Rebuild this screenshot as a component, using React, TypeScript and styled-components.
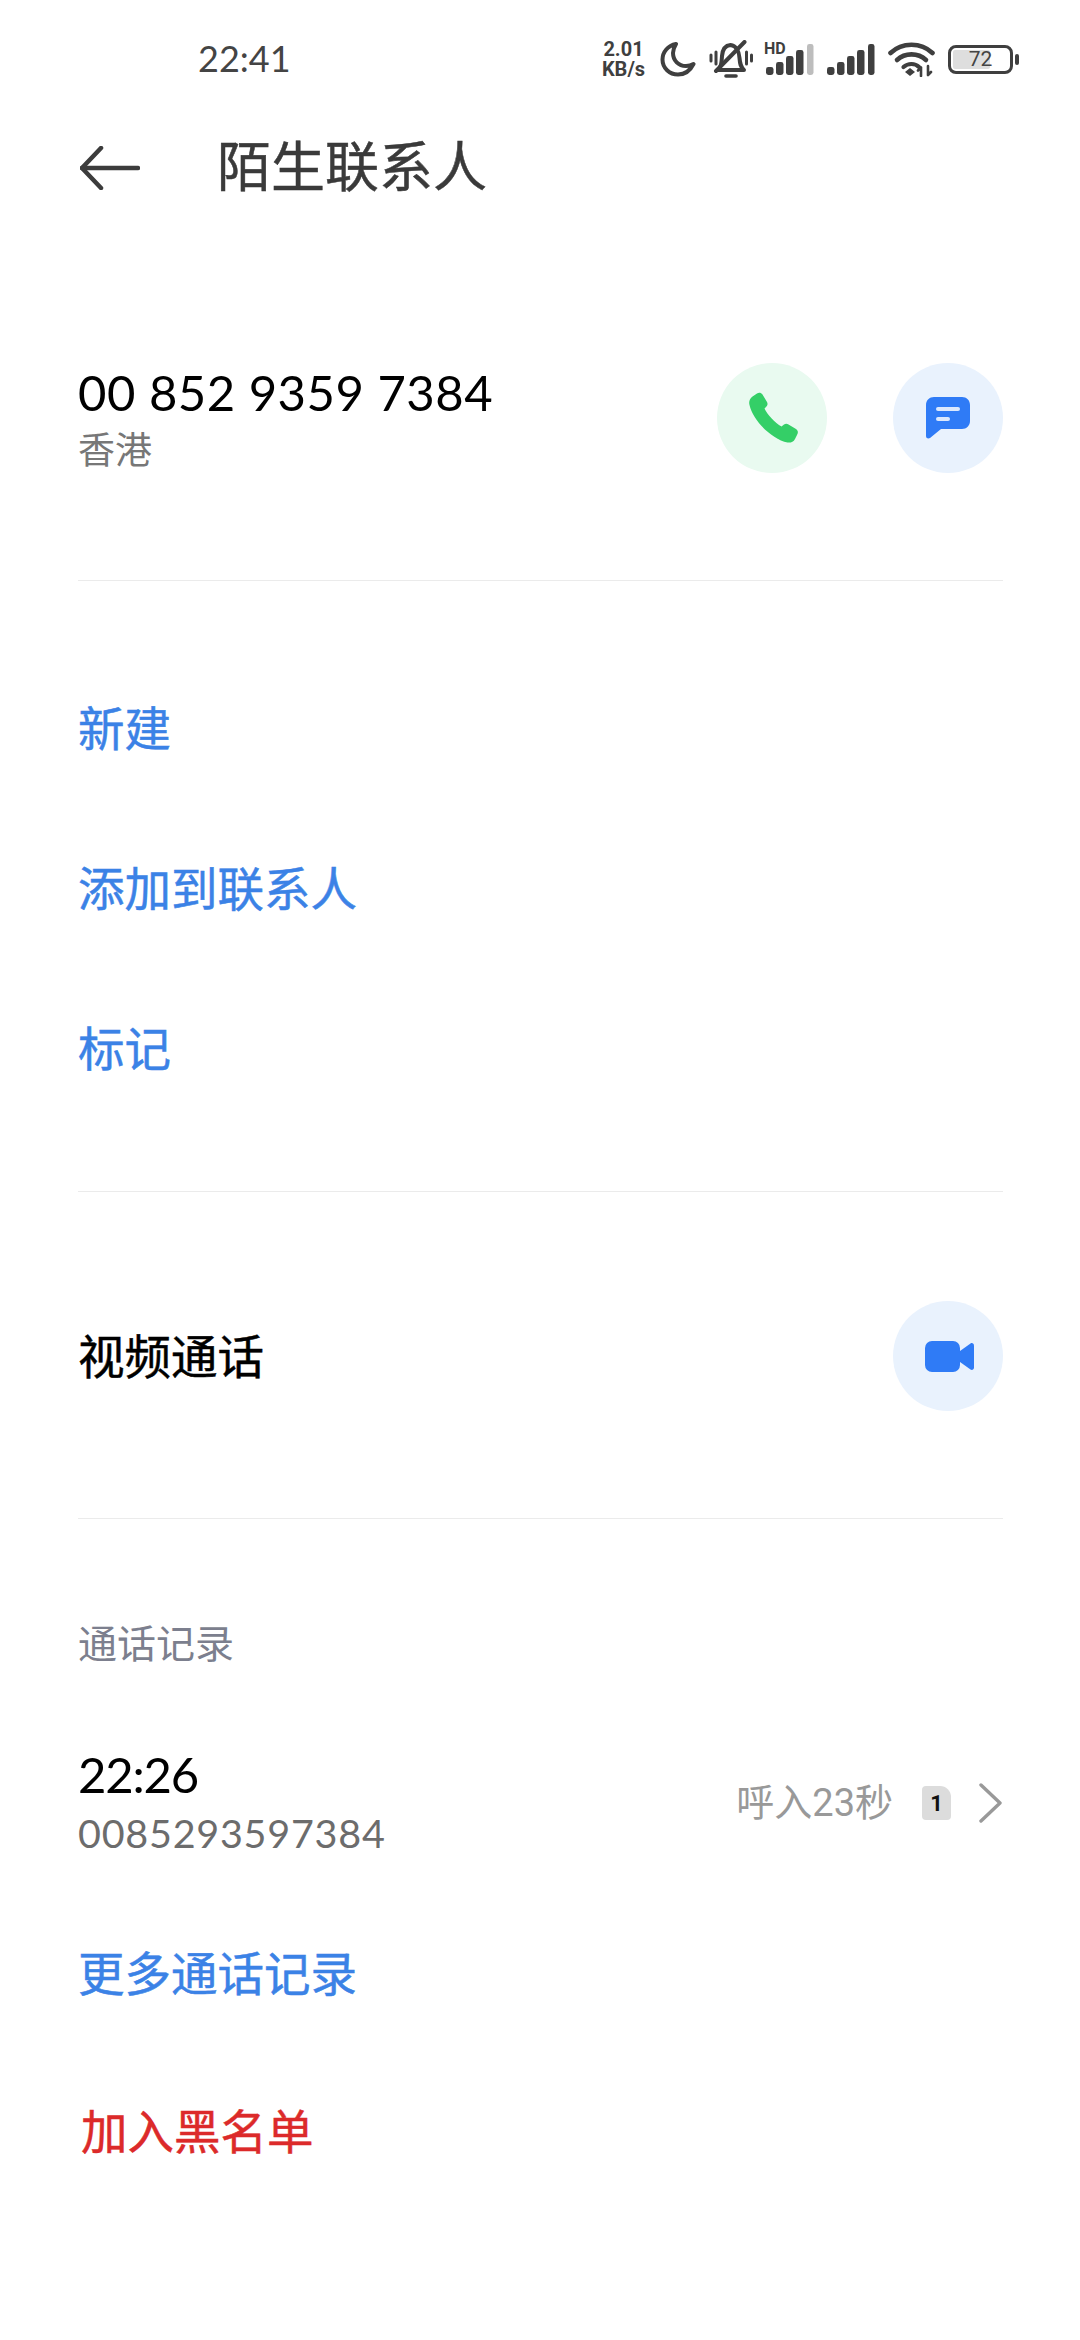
import React from 'react';
import styled, { createGlobalStyle } from 'styled-components';

const FONT = `Roboto, "Noto Sans CJK SC", sans-serif`;
const DIGITS = `Lato, "Noto Sans CJK SC", sans-serif`;

const GlobalStyle = createGlobalStyle`
  html, body {
    margin: 0;
    padding: 0;
    background: #fff;
  }
  body {
    font-family: ${FONT};
  }
`;

const Page = styled.div`
  width: 1080px;
  height: 2340px;
  background: #fff;
  overflow: hidden;
`;

const StatusBar = styled.div`
  height: 116px;
  display: flex;
  align-items: center;
  justify-content: space-between;
  padding: 2px 61px 0 198px;
  box-sizing: border-box;
  color: #3f3f3f;
`;

const Clock = styled.span`
  padding-bottom: 3px;
  font-family: ${DIGITS};
  font-size: 36px;
  color: #444;
`;

const StatusGroup = styled.div`
  display: flex;
  align-items: center;
  gap: 13px;
`;

const NetSpeed = styled.div`
  width: 47px;
  font-size: 20px;
  line-height: 20px;
  font-weight: 700;
  text-align: center;
`;

const SimSignal = styled.div`
  position: relative;
  display: flex;
`;

const HdTag = styled.span`
  position: absolute;
  left: -2px;
  top: -2px;
  font-size: 16px;
  line-height: 14px;
  font-weight: 700;
`;

const BatteryWrap = styled.div`
  display: flex;
  align-items: center;
`;

const Battery = styled.div`
  width: 65px;
  height: 29px;
  box-sizing: border-box;
  border: 3px solid #3f3f3f;
  border-radius: 8px;
  padding: 2px;
  position: relative;
  display: flex;
`;

const BatteryFill = styled.div`
  width: 68%;
  background: #dedede;
  border-radius: 2px;
`;

const BatteryLabel = styled.span`
  position: absolute;
  inset: 0;
  display: flex;
  align-items: center;
  justify-content: center;
  font-size: 21px;
  color: #444;
`;

const BatteryCap = styled.div`
  width: 4px;
  height: 11px;
  margin-left: 2px;
  background: #3f3f3f;
  border-radius: 2px;
`;

const TitleBar = styled.header`
  height: 104px;
  display: flex;
  align-items: center;
  padding-left: 80px;
`;

const BackButton = styled.div`
  width: 137px;
  display: flex;
`;

const Title = styled.h1`
  margin: 0;
  padding-top: 2px;
  font-size: 54px;
  line-height: 60px;
  font-weight: 400;
  -webkit-text-stroke: 0.5px #3a3a3a;
  color: #3a3a3a;
`;

const Section = styled.section<{ $height: number; $top?: number; $divider?: boolean }>`
  height: ${(p) => p.$height}px;
  box-sizing: border-box;
  margin: 0 77px 0 78px;
  padding-top: ${(p) => p.$top ?? 0}px;
  border-bottom: ${(p) => (p.$divider ? '1.5px solid #ebebeb' : 'none')};
`;

const NumberRow = styled.div`
  height: 110px;
  display: flex;
  align-items: center;
  justify-content: space-between;
`;

const NumberBlock = styled.div`
  padding-top: 5px;
  display: flex;
  flex-direction: column;
`;

const PhoneNumber = styled.div`
  font-family: ${DIGITS};
  font-size: 49px;
  line-height: 58px;
  letter-spacing: 0.5px;
  color: #000;
`;

const Region = styled.div`
  font-size: 37px;
  line-height: 52px;
  margin-top: 5px;
  color: #777;
`;

const CircleGroup = styled.div`
  display: flex;
  gap: 66px;
`;

const Circle = styled.div<{ $tint: string }>`
  width: 110px;
  height: 110px;
  border-radius: 50%;
  background: ${(p) => p.$tint};
  display: flex;
  align-items: center;
  justify-content: center;
`;

const ActionList = styled.div<{ $top?: number }>`
  display: flex;
  flex-direction: column;
  margin-top: ${(p) => p.$top ?? 0}px;
`;

const ActionLink = styled.div<{ $color?: string; $height?: number; $indent?: number }>`
  height: ${(p) => p.$height ?? 160}px;
  box-sizing: border-box;
  padding: 0 0 5px ${(p) => p.$indent ?? 0}px;
  display: flex;
  align-items: center;
  font-size: 46.5px;
  -webkit-text-stroke: 0.5px ${(p) => p.$color ?? '#3b82e6'};
  color: ${(p) => p.$color ?? '#3b82e6'};
`;

const VideoRow = styled.div`
  height: 328px;
  display: flex;
  align-items: center;
  justify-content: space-between;
`;

const VideoLabel = styled.span`
  padding-bottom: 6px;
  font-size: 46.5px;
  -webkit-text-stroke: 0.5px #000;
  color: #000;
`;

const SectionLabel = styled.div`
  font-size: 39px;
  line-height: 54px;
  color: #7c7f8e;
`;

const CallRow = styled.div`
  margin-top: 72px;
  display: flex;
  align-items: center;
  justify-content: space-between;
`;

const CallInfo = styled.div`
  display: flex;
  flex-direction: column;
`;

const CallTime = styled.div`
  font-family: ${DIGITS};
  font-size: 49px;
  line-height: 60px;
  letter-spacing: -1.2px;
  color: #000;
`;

const CallNumber = styled.div`
  font-family: ${DIGITS};
  font-size: 39.5px;
  line-height: 58px;
  letter-spacing: 0.75px;
  color: #6c6c6c;
`;

const CallMeta = styled.div`
  display: flex;
  align-items: center;
`;

const CallDetail = styled.span`
  padding-bottom: 8px;
  font-size: 38px;
  color: #999;
`;

const SimBadge = styled.span`
  width: 29px;
  height: 34px;
  margin: 0 28px 0 29px;
  background: #dcdcdc;
  border-radius: 4px 11px 4px 4px;
  color: #111;
  font-size: 22px;
  font-weight: 700;
  display: flex;
  align-items: center;
  justify-content: center;
`;

const PhoneGlyph = styled.svg`
  margin-left: 3px;
`;

const VideoGlyph = styled.svg`
  margin-left: 3px;
`;

const BLUE = '#2f7bf6';
const INK = '#3f3f3f';

const Moon = () => (
  <svg width="36" height="36" viewBox="0 0 36 36" fill="none">
    <path d="M16 3 C8 4.5 2.5 11 2.5 18.5 C2.5 27 9.5 33.5 18 33.5 C25 33.5 30.5 29 33.5 23 C31 24.5 28.5 25 26 25 C18.5 25 13 19.5 13 12 C13 9 14.2 6 16 3 Z" stroke={INK} strokeWidth="4" strokeLinejoin="round" />
  </svg>
);

const MutedBell = () => (
  <svg width="44" height="38" viewBox="0 0 44 38" fill="none" stroke={INK} strokeLinecap="round">
    <path d="M9 30 H35 C31.5 27 31 24 30.5 18 C30 11 27 5.5 21.5 5 C16 5.5 13.5 10 13 16 C12.5 24 12 27 9 30 Z" strokeWidth="4" strokeLinejoin="round" />
    <path d="M35.5 2 L7 31" strokeWidth="4" />
    <path d="M17 36 H27" strokeWidth="3.6" />
    <path d="M2 15 V21 M7 12 V24 M37.5 12 V24 M42.5 15 V21" strokeWidth="3" />
  </svg>
);

const Signal = ({ dim }: { dim?: boolean }) => (
  <svg width="48" height="31" viewBox="0 0 48 31">
    <rect x="0" y="23" width="7.5" height="8" rx="2.4" fill={INK} />
    <rect x="10" y="18" width="7.5" height="13" rx="2.4" fill={INK} />
    <rect x="20" y="12" width="7.5" height="19" rx="2.4" fill={INK} />
    <rect x="30" y="6" width="7.5" height="25" rx="2.4" fill={INK} />
    <rect x="41" y="0" width="6.5" height="31" rx="2.4" fill={dim ? '#bdbdbd' : INK} />
  </svg>
);

const Wifi = () => (
  <svg width="47" height="36" viewBox="0 0 47 36" fill="none" stroke={INK} strokeLinecap="round">
    <path d="M2.5 12 C14 1 33 1 44.5 12" strokeWidth="4.6" />
    <path d="M9 19 C17 11.5 30 11.5 38 19" strokeWidth="4.6" />
    <path d="M15.5 26 C20 22 27 22 31 26" strokeWidth="4.2" />
    <path d="M17 31 L22 27 L27 31 L22 35 Z" fill={INK} stroke="none" />
    <path d="M33 35 V27 M30 29.5 L33 26.5 M40 25 V33.5 M43 31 L40 34" strokeWidth="2.6" />
  </svg>
);

const ArrowBack = () => (
  <svg width="60" height="44" viewBox="0 0 60 44" fill="none" stroke="#3c3c3c" strokeWidth="4.5" strokeLinecap="round" strokeLinejoin="round">
    <path d="M21 2 L2 22 L21 42" />
    <path d="M2 22 H58" />
  </svg>
);

const PhoneIcon = () => (
  <PhoneGlyph width="52" height="52" viewBox="0 0 52 52">
    <path d="M9 1.5 C11 0 13 0.5 14.5 2.5 L19 10 C20 12 19.5 13.5 18 15 L16.5 16.5 C19 22 27 31 33.5 34.5 L36 32.5 C37.5 31.5 39 31.5 40.5 32.5 L48 37 C50 38.5 50.5 40.5 49 43 L47 47 C45.5 50 42.5 51 39.5 50.5 C24 47 5 29 1.5 13 C0.5 9.5 2 6.5 4.5 4.5 Z" fill="#34cf67" />
  </PhoneGlyph>
);

const MessageIcon = () => (
  <svg width="44" height="42" viewBox="0 0 44 42">
    <path d="M8 0 H36 C40.5 0 44 3 44 8 V24 C44 28.5 40.5 32 36 32 H15 L4 41 C2.5 42 0 41.5 0 39 V8 C0 3 3.5 0 8 0 Z" fill={BLUE} />
    <rect x="10" y="10" width="24" height="4" rx="2" fill="#dbe8fd" />
    <rect x="10" y="20" width="14" height="4" rx="2" fill="#dbe8fd" />
  </svg>
);

const VideoIcon = () => (
  <VideoGlyph width="49" height="31" viewBox="0 0 49 31">
    <rect x="0" y="0" width="35" height="31" rx="7" fill={BLUE} />
    <path d="M35 10 L45.5 2.5 C47 1.5 49 2.5 49 4.5 V26.5 C49 28.5 47 29.5 45.5 28.5 L35 21 Z" fill={BLUE} />
  </VideoGlyph>
);

const Chevron = () => (
  <svg width="24" height="40" viewBox="0 0 24 40" fill="none" stroke="#999" strokeWidth="3.4" strokeLinecap="round" strokeLinejoin="round">
    <path d="M2 2 L21 20 L2 38" />
  </svg>
);

export default function App() {
  return (
    <Page>
      <GlobalStyle />
      <StatusBar>
        <Clock>22:41</Clock>
        <StatusGroup>
          <NetSpeed>2.01<br />KB/s</NetSpeed>
          <Moon />
          <MutedBell />
          <SimSignal>
            <HdTag>HD</HdTag>
            <Signal dim />
          </SimSignal>
          <Signal />
          <Wifi />
          <BatteryWrap>
            <Battery>
              <BatteryFill />
              <BatteryLabel>72</BatteryLabel>
            </Battery>
            <BatteryCap />
          </BatteryWrap>
        </StatusGroup>
      </StatusBar>

      <TitleBar>
        <BackButton><ArrowBack /></BackButton>
        <Title>陌生联系人</Title>
      </TitleBar>

      <Section $height={361} $top={143} $divider>
        <NumberRow>
          <NumberBlock>
            <PhoneNumber>00 852 9359 7384</PhoneNumber>
            <Region>香港</Region>
          </NumberBlock>
          <CircleGroup>
            <Circle $tint="#e9faf0"><PhoneIcon /></Circle>
            <Circle $tint="#e9f2fd"><MessageIcon /></Circle>
          </CircleGroup>
        </NumberRow>
      </Section>

      <Section $height={611} $top={67} $divider>
        <ActionList>
          <ActionLink>新建</ActionLink>
          <ActionLink>添加到联系人</ActionLink>
          <ActionLink>标记</ActionLink>
        </ActionList>
      </Section>

      <Section $height={327} $divider>
        <VideoRow>
          <VideoLabel>视频通话</VideoLabel>
          <Circle $tint="#e9f2fd"><VideoIcon /></Circle>
        </VideoRow>
      </Section>

      <Section $height={820} $top={99}>
        <SectionLabel>通话记录</SectionLabel>
        <CallRow>
          <CallInfo>
            <CallTime>22:26</CallTime>
            <CallNumber>0085293597384</CallNumber>
          </CallInfo>
          <CallMeta>
            <CallDetail>呼入23秒</CallDetail>
            <SimBadge>1</SimBadge>
            <Chevron />
          </CallMeta>
        </CallRow>
        <ActionList $top={31}>
          <ActionLink>更多通话记录</ActionLink>
          <ActionLink $color="#dc2a2a" $height={155} $indent={3}>加入黑名单</ActionLink>
        </ActionList>
      </Section>
    </Page>
  );
}
